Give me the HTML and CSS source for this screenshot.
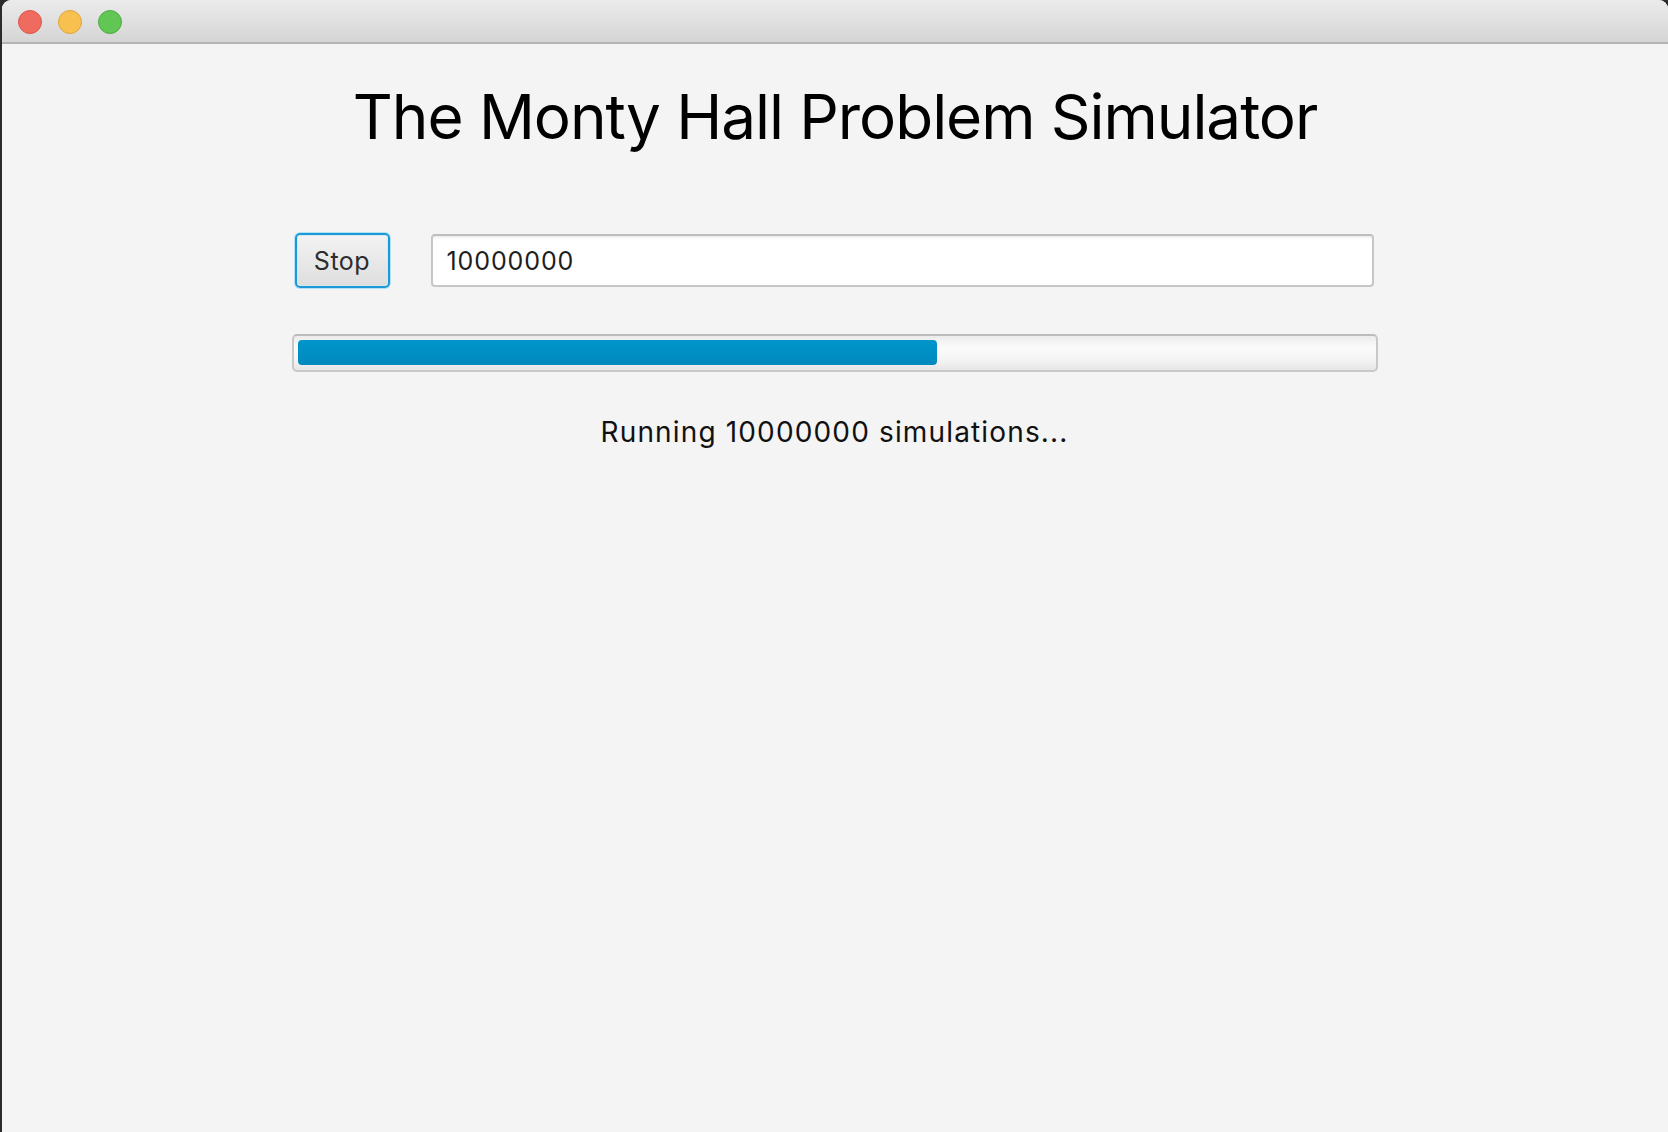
FILE: index.html
```html
<!DOCTYPE html>
<html>
<head>
<meta charset="utf-8">
<title>The Monty Hall Problem Simulator</title>
<link rel="stylesheet" href="styles.css">
</head>
<body>
<div class="window">
  <div class="titlebar">
    <span class="light red"></span>
    <span class="light yellow"></span>
    <span class="light green"></span>
  </div>
  <div class="content">
    <h1 class="title">The Monty Hall Problem Simulator</h1>
    <div class="panel">
      <div class="controls">
        <button class="btn">Stop</button>
        <div class="field">10000000</div>
      </div>
      <div class="progress">
        <div class="progress-fill" style="width: 59.55%"></div>
      </div>
      <p class="status">Running 10000000 simulations...</p>
    </div>
  </div>
</div>
</body>
</html>
```
FILE: styles.css
```css
html, body {
  margin: 0;
  padding: 0;
  background: #2b2b2b;
  width: 1668px;
  height: 1132px;
  overflow: hidden;
}

.window {
  margin-left: 2px;
  height: 1132px;
  background: #f4f4f4;
  border-radius: 9px 9px 0 0;
  overflow: hidden;
  font-family: Inter, "Noto Sans", sans-serif;
}

.titlebar {
  height: 41px;
  border-bottom: 2px solid #b4b4b4;
  background: linear-gradient(#ebebeb, #d5d5d5);
  display: flex;
  align-items: center;
  gap: 16px;
  padding-left: 16px;
  padding-top: 1px;
  box-sizing: content-box;
}

.light {
  width: 22px;
  height: 22px;
  border-radius: 50%;
  display: block;
}
.red { background: #ef6b60; border: 1px solid #dc554a; }
.yellow { background: #f7c04f; border: 1px solid #e0a63a; }
.green { background: #62c655; border: 1px solid #4fac42; }

.content {
  display: flex;
  flex-direction: column;
  align-items: center;
}

.title {
  margin: 34px 0 0 0;
  font-size: 62px;
  font-weight: 400;
  line-height: 78px;
  color: #000;
  letter-spacing: -1.05px;
}

.panel {
  width: 1086px;
  margin-top: 77px;
  margin-right: 1px;
}

.controls {
  display: flex;
  align-items: center;
  gap: 41px;
  padding: 0 4px 0 3px;
}

.btn {
  width: 95px;
  height: 55px;
  box-sizing: border-box;
  border: 2px solid #1a9bd7;
  border-radius: 5px;
  box-shadow: 0 0 0 1px #b5e0f3, inset 0 0 0 1px #d9e8ef;
  background: linear-gradient(#f3f3f3, #dedede);
  font-family: Inter, "Noto Sans", sans-serif;
  font-size: 25px;
  letter-spacing: 0.5px;
  color: #2d2d2d;
  padding: 0;
}

.field {
  flex: 1;
  height: 53px;
  box-sizing: border-box;
  border: 2px solid #c6c6c6;
  border-top-color: #bdbdbd;
  border-radius: 4px;
  background: #fff;
  box-shadow: inset 0 3px 3px -2px #e3e3e3;
  font-size: 25px;
  letter-spacing: 0.9px;
  color: #1e1e1e;
  padding-left: 14px;
  display: flex;
  align-items: center;
}

.progress {
  margin-top: 46px;
  height: 38px;
  box-sizing: border-box;
  border: 2px solid #c8c8c8;
  border-top-color: #bcbcbc;
  border-radius: 5px;
  background: linear-gradient(#ececec, #fbfbfb 35%, #f4f4f4 70%, #e6e6e6);
  padding: 4px 4px 5px 4px;
}

.progress-fill {
  height: 100%;
  border-radius: 4px;
  background: linear-gradient(#0096cb, #0089bd);
}

.status {
  margin: 43px 0 0 0;
  text-align: center;
  font-size: 28px;
  letter-spacing: 1.15px;
  line-height: 34px;
  color: #111;
}
```
